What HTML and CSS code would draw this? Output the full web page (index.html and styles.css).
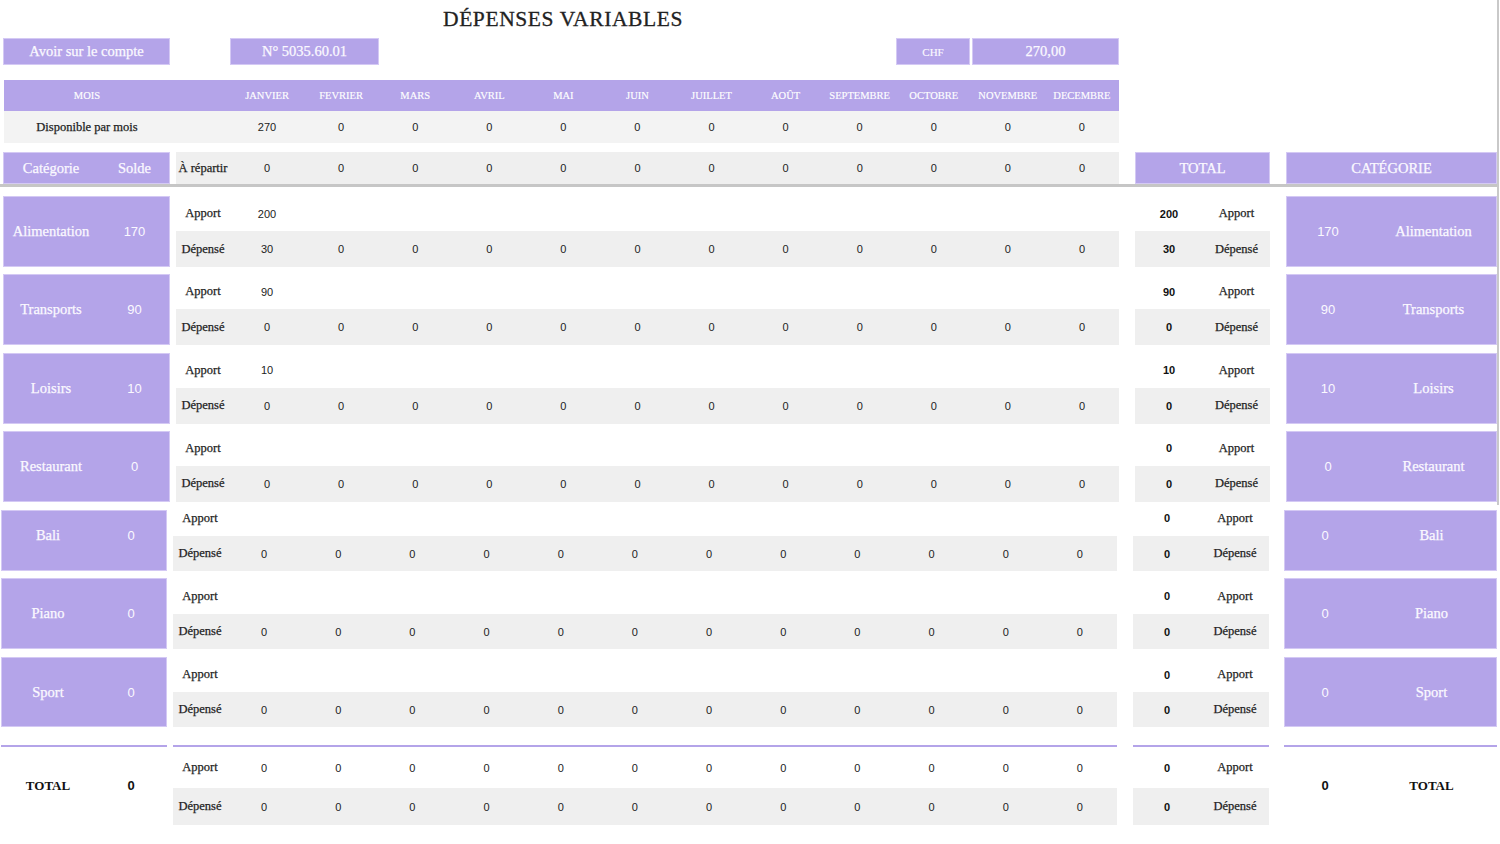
FILE: index.html
```html
<!DOCTYPE html>
<html lang="fr">
<head>
<meta charset="utf-8">
<title>Dépenses variables</title>
<link rel="stylesheet" href="styles.css">
</head>
<body>
<div class="top sec-top">
  <h1 class="title">DÉPENSES VARIABLES</h1>
  <div class="acct">
    <div class="box b-avoir">Avoir sur le compte</div>
    <div class="box b-num">N° 5035.60.01</div>
    <div class="box b-chf">CHF</div>
    <div class="box b-amt">270,00</div>
  </div>
  <div class="hdr">
    <span>MOIS</span><span></span>
    <span>JANVIER</span><span>FEVRIER</span><span>MARS</span><span>AVRIL</span><span>MAI</span><span>JUIN</span><span>JUILLET</span><span>AOÛT</span><span>SEPTEMBRE</span><span>OCTOBRE</span><span>NOVEMBRE</span><span>DECEMBRE</span>
  </div>
  <div class="dispo">
    <span class="lb">Disponible par mois</span><span></span>
    <span class="v">270</span><span class="v">0</span><span class="v">0</span><span class="v">0</span><span class="v">0</span><span class="v">0</span><span class="v">0</span><span class="v">0</span><span class="v">0</span><span class="v">0</span><span class="v">0</span><span class="v">0</span>
  </div>
  <div class="blk cathdr">
    <div class="card cl"><span>Catégorie</span><span>Solde</span></div>
    <div class="mid"><div class="r dp full"><span class="lb">À répartir</span><span class="v">0</span><span class="v">0</span><span class="v">0</span><span class="v">0</span><span class="v">0</span><span class="v">0</span><span class="v">0</span><span class="v">0</span><span class="v">0</span><span class="v">0</span><span class="v">0</span><span class="v">0</span></div></div>
    <div class="tot box">TOTAL</div>
    <div class="cr box">CATÉGORIE</div>
  </div>
  <div class="sep"></div>
  <div class="blocks">
    <div class="blk">
      <div class="card cl"><span>Alimentation</span><span class="n">170</span></div>
      <div class="mid">
        <div class="r ap"><span class="lb">Apport</span><span class="v">200</span></div>
        <div class="r dp"><span class="lb">Dépensé</span><span class="v">30</span><span class="v">0</span><span class="v">0</span><span class="v">0</span><span class="v">0</span><span class="v">0</span><span class="v">0</span><span class="v">0</span><span class="v">0</span><span class="v">0</span><span class="v">0</span><span class="v">0</span></div>
      </div>
      <div class="tot">
        <div class="r2 ap"><b>200</b><span class="lb">Apport</span></div>
        <div class="r2 dp"><b>30</b><span class="lb">Dépensé</span></div>
      </div>
      <div class="card cr"><span class="n">170</span><span>Alimentation</span></div>
    </div>
    <div class="blk">
      <div class="card cl"><span>Transports</span><span class="n">90</span></div>
      <div class="mid">
        <div class="r ap"><span class="lb">Apport</span><span class="v">90</span></div>
        <div class="r dp"><span class="lb">Dépensé</span><span class="v">0</span><span class="v">0</span><span class="v">0</span><span class="v">0</span><span class="v">0</span><span class="v">0</span><span class="v">0</span><span class="v">0</span><span class="v">0</span><span class="v">0</span><span class="v">0</span><span class="v">0</span></div>
      </div>
      <div class="tot">
        <div class="r2 ap"><b>90</b><span class="lb">Apport</span></div>
        <div class="r2 dp"><b>0</b><span class="lb">Dépensé</span></div>
      </div>
      <div class="card cr"><span class="n">90</span><span>Transports</span></div>
    </div>
    <div class="blk">
      <div class="card cl"><span>Loisirs</span><span class="n">10</span></div>
      <div class="mid">
        <div class="r ap"><span class="lb">Apport</span><span class="v">10</span></div>
        <div class="r dp"><span class="lb">Dépensé</span><span class="v">0</span><span class="v">0</span><span class="v">0</span><span class="v">0</span><span class="v">0</span><span class="v">0</span><span class="v">0</span><span class="v">0</span><span class="v">0</span><span class="v">0</span><span class="v">0</span><span class="v">0</span></div>
      </div>
      <div class="tot">
        <div class="r2 ap"><b>10</b><span class="lb">Apport</span></div>
        <div class="r2 dp"><b>0</b><span class="lb">Dépensé</span></div>
      </div>
      <div class="card cr"><span class="n">10</span><span>Loisirs</span></div>
    </div>
    <div class="blk">
      <div class="card cl"><span>Restaurant</span><span class="n">0</span></div>
      <div class="mid">
        <div class="r ap"><span class="lb">Apport</span></div>
        <div class="r dp"><span class="lb">Dépensé</span><span class="v">0</span><span class="v">0</span><span class="v">0</span><span class="v">0</span><span class="v">0</span><span class="v">0</span><span class="v">0</span><span class="v">0</span><span class="v">0</span><span class="v">0</span><span class="v">0</span><span class="v">0</span></div>
      </div>
      <div class="tot">
        <div class="r2 ap"><b>0</b><span class="lb">Apport</span></div>
        <div class="r2 dp"><b>0</b><span class="lb">Dépensé</span></div>
      </div>
      <div class="card cr"><span class="n">0</span><span>Restaurant</span></div>
    </div>
  </div>
</div>
<div class="bot sec-bot">
  <div class="blk b-bali">
    <div class="card cl"><span>Bali</span><span class="n">0</span></div>
    <div class="mid">
      <div class="r ap"><span class="lb">Apport</span></div>
      <div class="r dp"><span class="lb">Dépensé</span><span class="v">0</span><span class="v">0</span><span class="v">0</span><span class="v">0</span><span class="v">0</span><span class="v">0</span><span class="v">0</span><span class="v">0</span><span class="v">0</span><span class="v">0</span><span class="v">0</span><span class="v">0</span></div>
    </div>
    <div class="tot">
      <div class="r2 ap"><b>0</b><span class="lb">Apport</span></div>
      <div class="r2 dp"><b>0</b><span class="lb">Dépensé</span></div>
    </div>
    <div class="card cr"><span class="n">0</span><span>Bali</span></div>
  </div>
  <div class="blk b-piano">
    <div class="card cl"><span>Piano</span><span class="n">0</span></div>
    <div class="mid">
      <div class="r ap"><span class="lb">Apport</span></div>
      <div class="r dp"><span class="lb">Dépensé</span><span class="v">0</span><span class="v">0</span><span class="v">0</span><span class="v">0</span><span class="v">0</span><span class="v">0</span><span class="v">0</span><span class="v">0</span><span class="v">0</span><span class="v">0</span><span class="v">0</span><span class="v">0</span></div>
    </div>
    <div class="tot">
      <div class="r2 ap"><b>0</b><span class="lb">Apport</span></div>
      <div class="r2 dp"><b>0</b><span class="lb">Dépensé</span></div>
    </div>
    <div class="card cr"><span class="n">0</span><span>Piano</span></div>
  </div>
  <div class="blk b-sport">
    <div class="card cl"><span>Sport</span><span class="n">0</span></div>
    <div class="mid">
      <div class="r ap"><span class="lb">Apport</span></div>
      <div class="r dp"><span class="lb">Dépensé</span><span class="v">0</span><span class="v">0</span><span class="v">0</span><span class="v">0</span><span class="v">0</span><span class="v">0</span><span class="v">0</span><span class="v">0</span><span class="v">0</span><span class="v">0</span><span class="v">0</span><span class="v">0</span></div>
    </div>
    <div class="tot">
      <div class="r2 ap"><b>0</b><span class="lb">Apport</span></div>
      <div class="r2 dp"><b>0</b><span class="lb">Dépensé</span></div>
    </div>
    <div class="card cr"><span class="n">0</span><span>Sport</span></div>
  </div>
  <div class="blk b-total">
    <div class="cl tl"><span>TOTAL</span><span class="n">0</span></div>
    <div class="mid tl-line">
      <div class="r ap"><span class="lb">Apport</span><span class="v">0</span><span class="v">0</span><span class="v">0</span><span class="v">0</span><span class="v">0</span><span class="v">0</span><span class="v">0</span><span class="v">0</span><span class="v">0</span><span class="v">0</span><span class="v">0</span><span class="v">0</span></div>
      <div class="r dp"><span class="lb">Dépensé</span><span class="v">0</span><span class="v">0</span><span class="v">0</span><span class="v">0</span><span class="v">0</span><span class="v">0</span><span class="v">0</span><span class="v">0</span><span class="v">0</span><span class="v">0</span><span class="v">0</span><span class="v">0</span></div>
    </div>
    <div class="tot tl-line">
      <div class="r2 ap"><b>0</b><span class="lb">Apport</span></div>
      <div class="r2 dp"><b>0</b><span class="lb">Dépensé</span></div>
    </div>
    <div class="cr tl"><span class="n">0</span><span>TOTAL</span></div>
  </div>
</div>
</body>
</html>
```

FILE: styles.css
```css
* { box-sizing: border-box; margin: 0; padding: 0; }

body {
  margin: 0;
  width: 1500px;
  height: 844px;
  overflow: hidden;
  background: #ffffff;
  color: #222222;
  font-family: "Liberation Serif", "DejaVu Serif", serif;
}

.sec-top {
  --lw: 167px;
  --mw: 943px;
  --tw: 135px;
  --rw: 211px;
  --g1: 6px;
  --g2: 16px;
  --g3: 16px;
  --lcol: 96px 71px;
  --rcol: 84px 127px;
}

.sec-bot {
  --lw: 166px;
  --mw: 944px;
  --tw: 136px;
  --rw: 213px;
  --g1: 6px;
  --g2: 16px;
  --g3: 15px;
  --lcol: 94px 72px;
  --rcol: 82px 131px;
}

.top {
  width: 1499px;
  height: 505px;
  padding-left: 3px;
  border-right: 2px solid #c9c9c9;
}

.bot {
  padding-left: 1px;
}

.title {
  width: 1116px;
  height: 38px;
  padding-left: 4px;
  text-align: center;
  font-weight: normal;
  font-size: 21.5px;
  letter-spacing: 0.6px;
  line-height: 39px;
  color: #222;
  -webkit-text-stroke: 0.3px #222;
}

.acct {
  display: flex;
  width: 1116px;
  height: 27px;
}

.box {
  background: #b4a4e9;
  color: #fbf9ff;
  box-shadow: inset 0 0 0 1px #d4c9f4;
  display: flex;
  align-items: center;
  justify-content: center;
  font-size: 14.5px;
  -webkit-text-stroke: 0.25px #fbf9ff;
}

.b-avoir { width: 167px; }
.b-num { width: 149px; margin-left: 60px; }
.b-chf { width: 74px; margin-left: auto; font-size: 11px; -webkit-text-stroke: 0.15px #fbf9ff; }
.b-amt { width: 147px; margin-left: 2px; }

.hdr,
.dispo {
  display: grid;
  grid-template-columns: 166px 60px repeat(12, 74.083px);
  width: 1115px;
  margin-left: 1px;
  align-items: center;
  text-align: center;
}

.hdr {
  margin-top: 15px;
  height: 31px;
  background: #b4a4e9;
  color: #ffffff;
  font-size: 10.5px;
  -webkit-text-stroke: 0.15px #ffffff;
}

.dispo {
  height: 32px;
  background: #f3f3f3;
}

.lb {
  font-size: 12.5px;
  color: #1e1e1e;
  text-align: center;
  -webkit-text-stroke: 0.25px #1e1e1e;
}

.v {
  font-family: "Liberation Sans", Arial, sans-serif;
  font-size: 11px;
  color: #222;
  text-align: center;
}

.blk {
  display: flex;
  height: 71px;
}

.cathdr {
  margin-top: 9px;
  height: 32px;
}

.cl {
  width: var(--lw);
  flex: none;
  display: grid;
  grid-template-columns: var(--lcol);
  align-items: center;
  text-align: center;
}

.mid {
  width: var(--mw);
  margin-left: var(--g1);
  flex: none;
  display: flex;
  flex-direction: column;
}

.tot {
  width: var(--tw);
  margin-left: var(--g2);
  flex: none;
  display: flex;
  flex-direction: column;
}

.cr {
  width: var(--rw);
  margin-left: var(--g3);
  flex: none;
  display: grid;
  grid-template-columns: var(--rcol);
  align-items: center;
  text-align: center;
}

.cathdr .tot,
.cathdr .cr {
  display: flex;
}

.card {
  background: #b4a4e9;
  color: #fbf9ff;
  box-shadow: inset 0 0 0 1px #d4c9f4;
  font-size: 14.5px;
  -webkit-text-stroke: 0.25px #fbf9ff;
}

.card .n {
  font-family: "Liberation Sans", Arial, sans-serif;
  font-size: 13px;
  -webkit-text-stroke: 0;
}

.r {
  display: grid;
  grid-template-columns: 54px repeat(12, 1fr);
  align-items: center;
  height: 35px;
}

.r.dp {
  flex: 1;
  background: #efefef;
}

.r.full {
  height: 32px;
}

.r2 {
  display: grid;
  grid-template-columns: 68px 1fr;
  align-items: center;
  height: 35px;
}

.r2.dp {
  flex: 1;
  background: #efefef;
}

.r2 b {
  font-family: "Liberation Sans", Arial, sans-serif;
  font-size: 11px;
  font-weight: bold;
  color: #111;
  text-align: center;
}

.sep {
  width: 1497px;
  height: 3px;
  margin-left: -3px;
  background: #c6c6c6;
}

.blocks {
  margin-top: 9px;
  display: flex;
  flex-direction: column;
  gap: 7.33px;
}

.b-bali {
  margin-top: 5px;
  height: 61px;
}

.b-bali .ap {
  height: 26px;
  padding-bottom: 10px;
}

.b-bali .card {
  padding-bottom: 11px;
}

.b-piano {
  margin-top: 7px;
}

.b-piano .ap { height: 36px; }

.b-sport {
  margin-top: 8px;
  height: 70px;
}

.b-total {
  margin-top: 18px;
  height: 80px;
}

.b-total .ap { height: 41px; }

.tl,
.tl-line {
  border-top: 2px solid #b4a4e9;
}

.tl {
  color: #111;
  font-weight: bold;
  font-size: 13px;
  height: 80px;
  align-items: center;
  padding-bottom: 1px;
}

.tl .n {
  font-family: "Liberation Sans", Arial, sans-serif;
  font-size: 13px;
  font-weight: bold;
}
```
